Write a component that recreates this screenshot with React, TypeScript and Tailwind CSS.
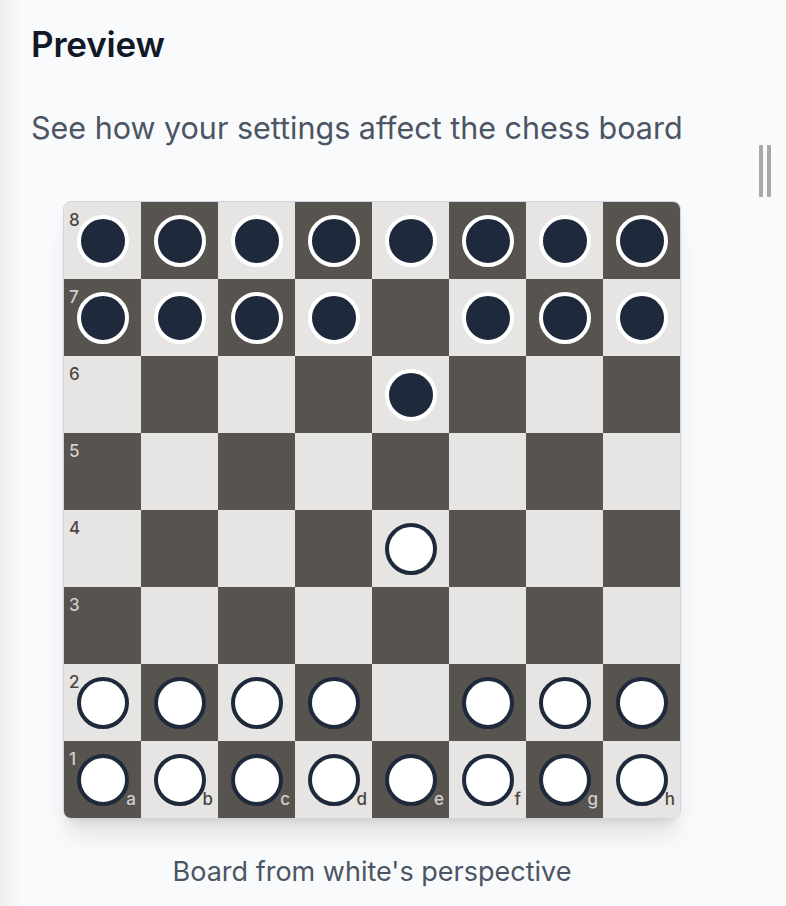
import React from "react";

const files = ["a", "b", "c", "d", "e", "f", "g", "h"];
const ranks = [8, 7, 6, 5, 4, 3, 2, 1];

function pieceAt(file: number, rank: number): "b" | "w" | null {
  if (rank === 8) return "b";
  if (rank === 7) return file === 4 ? null : "b";
  if (rank === 6) return file === 4 ? "b" : null;
  if (rank === 4) return file === 4 ? "w" : null;
  if (rank === 2) return file === 4 ? null : "w";
  if (rank === 1) return "w";
  return null;
}

export default function App() {
  return (
    <div
      className="relative min-h-[906px] w-full overflow-hidden bg-[#f9fafb]"
      style={{ fontFamily: "Inter, 'Noto Sans', sans-serif" }}
    >
      <div className="pointer-events-none absolute inset-y-0 left-0 w-[22px] bg-gradient-to-r from-[#eeeeee] to-transparent" />
      <div className="pointer-events-none absolute right-[15px] top-[145px] flex gap-[4px]">
        <div className="h-[52px] w-[4px] rounded-[1px] bg-[#a9a9a9]" />
        <div className="h-[52px] w-[4px] rounded-[1px] bg-[#a9a9a9]" />
      </div>
      <div className="relative pl-[31px] pr-[31px]">
        <h2 className="mt-[24px] text-[35px] font-semibold leading-[40px] tracking-[-0.2px] text-[#111827]">
          Preview
        </h2>
        <p className="mt-[46px] whitespace-nowrap text-[30.5px] leading-[36px] text-[#4b5563]">
          See how your settings affect the chess board
        </p>
        <div className="mt-[55px] flex w-[618px] flex-col ml-[32px]">
          <div className="grid grid-cols-8 overflow-hidden rounded-[8px] border border-[#d1d5db] shadow-xl">
            {ranks.map((rank) =>
              files.map((f, fi) => {
                const light = (fi + rank) % 2 === 0;
                const p = pieceAt(fi, rank);
                return (
                  <div
                    key={f + rank}
                    className={
                      "relative flex h-[77px] w-[77px] items-center justify-center " +
                      (light ? "bg-[#e7e5e4]" : "bg-[#57534e]")
                    }
                  >
                    {fi === 0 && (
                      <span
                        className={
                          "absolute left-[5px] top-[10px] text-[17px] font-medium leading-none " +
                          (light ? "text-[#4a4541]" : "text-[#d2cecb]")
                        }
                      >
                        {rank}
                      </span>
                    )}
                    {rank === 1 && (
                      <span
                        className={
                          "absolute bottom-[10px] right-[5px] text-[17px] font-medium leading-none " +
                          (light ? "text-[#4a4541]" : "text-[#d2cecb]")
                        }
                      >
                        {f}
                      </span>
                    )}
                    {p === "b" && (
                      <div className="relative z-10 h-[52px] w-[52px] rounded-full border-4 border-white bg-[#1e293b]" />
                    )}
                    {p === "w" && (
                      <div className="relative z-10 h-[52px] w-[52px] rounded-full border-4 border-[#1e293b] bg-white" />
                    )}
                  </div>
                );
              })
            )}
          </div>
          <p className="mt-[37px] text-center text-[27px] leading-[32px] text-[#4b5563]">
            Board from white's perspective
          </p>
        </div>
      </div>
    </div>
  );
}
